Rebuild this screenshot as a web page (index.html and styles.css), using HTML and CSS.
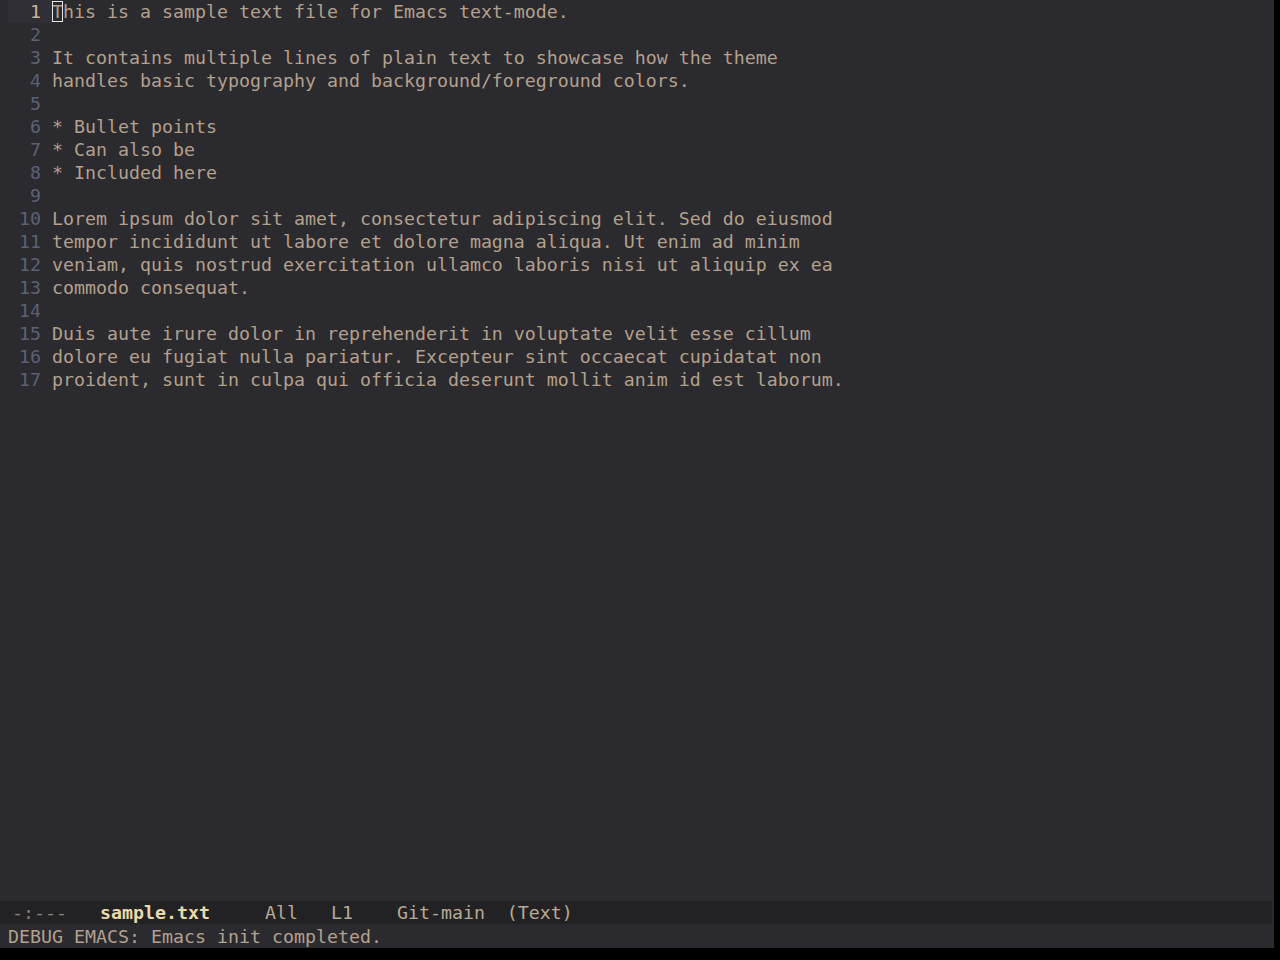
FILE: index.html
```html
<!DOCTYPE html>
<html lang="en">
<head>
    <meta charset="UTF-8">
    <title>sample.txt - Emacs</title>
    <link rel="stylesheet" href="styles.css">
</head>
<body>
    <div class="frame">
        <div class="buffer">
            <div class="line current"><span class="num">1</span><span class="text"><span class="cursor">T</span>his is a sample text file for Emacs text-mode.</span></div>
            <div class="line"><span class="num">2</span><span class="text"></span></div>
            <div class="line"><span class="num">3</span><span class="text">It contains multiple lines of plain text to showcase how the theme</span></div>
            <div class="line"><span class="num">4</span><span class="text">handles basic typography and background/foreground colors.</span></div>
            <div class="line"><span class="num">5</span><span class="text"></span></div>
            <div class="line"><span class="num">6</span><span class="text">* Bullet points</span></div>
            <div class="line"><span class="num">7</span><span class="text">* Can also be</span></div>
            <div class="line"><span class="num">8</span><span class="text">* Included here</span></div>
            <div class="line"><span class="num">9</span><span class="text"></span></div>
            <div class="line"><span class="num">10</span><span class="text">Lorem ipsum dolor sit amet, consectetur adipiscing elit. Sed do eiusmod</span></div>
            <div class="line"><span class="num">11</span><span class="text">tempor incididunt ut labore et dolore magna aliqua. Ut enim ad minim</span></div>
            <div class="line"><span class="num">12</span><span class="text">veniam, quis nostrud exercitation ullamco laboris nisi ut aliquip ex ea</span></div>
            <div class="line"><span class="num">13</span><span class="text">commodo consequat.</span></div>
            <div class="line"><span class="num">14</span><span class="text"></span></div>
            <div class="line"><span class="num">15</span><span class="text">Duis aute irure dolor in reprehenderit in voluptate velit esse cillum</span></div>
            <div class="line"><span class="num">16</span><span class="text">dolore eu fugiat nulla pariatur. Excepteur sint occaecat cupidatat non</span></div>
            <div class="line"><span class="num">17</span><span class="text">proident, sunt in culpa qui officia deserunt mollit anim id est laborum.</span></div>
        </div>
        <div class="mode-line"><span class="dim">-:---</span>   <span class="buf-name">sample.txt</span>     All   L1    Git-main  (Text)</div>
        <div class="echo">DEBUG EMACS: Emacs init completed.</div>
    </div>
</body>
</html>
```

FILE: styles.css
```css
body {
    margin: 0;
    background: #000;
    font-family: "DejaVu Sans Mono", monospace;
    font-size: 18.27px;
    line-height: 23px;
    color: #b4a08c;
}
.frame {
    width: 1274px;
    height: 948px;
    background: #2a2a2f;
    display: flex;
    flex-direction: column;
}
.buffer {
    flex: 1;
    padding-left: 8px;
}
.line {
    display: flex;
    height: 23px;
    white-space: pre;
}
.num {
    width: 33px;
    padding-right: 11px;
    text-align: right;
    color: #5c6273;
}
.line.current .num {
    background: #2f2f35;
    color: #c9b49a;
}
.cursor {
    outline: 1px solid #e4e4e4;
    outline-offset: -1px;
}
.mode-line {
    height: 23px;
    margin-right: 2px;
    padding-left: 12px;
    background: #222225;
    color: #b9a994;
    white-space: pre;
}
.mode-line .dim {
    color: #8a8078;
}
.buf-name {
    font-weight: bold;
    color: #ecd9a8;
}
.echo {
    height: 23px;
    padding-top: 1px;
    padding-left: 8px;
    color: #b4a08c;
    white-space: pre;
}
```
